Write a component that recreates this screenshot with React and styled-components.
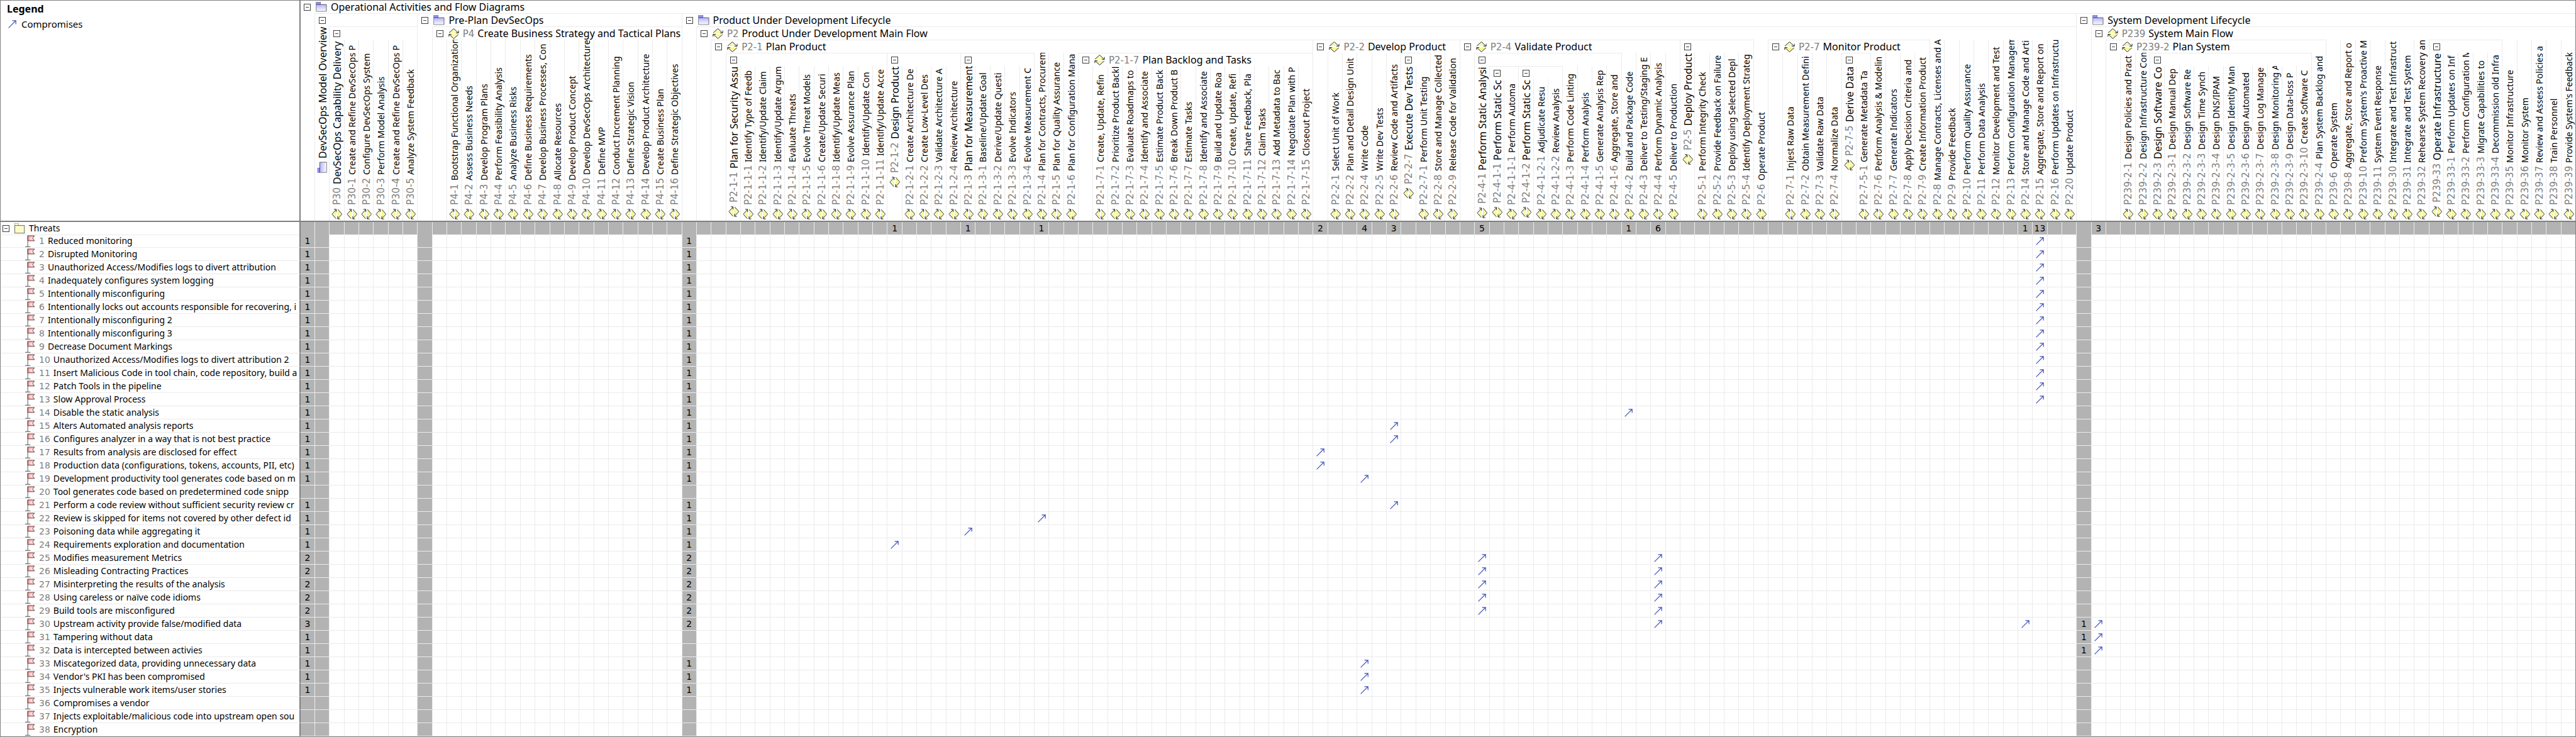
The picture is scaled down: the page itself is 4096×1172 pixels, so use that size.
import React from "react";
import styled, { createGlobalStyle } from "styled-components";

const color = {
  frame: "#808080",
  line: "#ebebeb",
  filled: "#b3b3b3",
  text: "#000",
  id: "#808080",
  box: "#404040",
  link: "#4353b8",
};
const sans = '"Noto Sans", "Open Sans", sans-serif';
const digits = '"DejaVu Sans", "Noto Sans", sans-serif';

/* ---------- data ---------- */

const leaf = (id, name) => ({ id, name });
const group = (id, name, children, opts = {}) => ({ id, name, children, ...opts });
const series = (prefix, entries) => entries.map(([n, name]) => leaf(`${prefix}-${n}`, name));
const numbered = (prefix, names) => names.map((name, i) => leaf(`${prefix}-${i + 1}`, name));
const upright = { upright: true };
const folder = { folder: true };

const activities = [
  group("", "DevSecOps Model Overview", [
    group("P30", "DevSecOps Capability Delivery I", numbered("P30", [
      "Create and Refine DevSecOps P",
      "Configure DevSecOps System",
      "Perform Model Analysis",
      "Create and Refine DevSecOps P",
      "Analyze System Feedback",
    ]), upright),
  ], { ...upright, ...folder }),
  group("", "Pre-Plan DevSecOps", [
    group("P4", "Create Business Strategy and Tactical Plans", numbered("P4", [
      "Bootstrap Functional Organization",
      "Assess Business Needs",
      "Develop Program Plans",
      "Perform Feasibility Analysis",
      "Analyze Business Risks",
      "Define Business Requirements",
      "Develop Business Processes, Con",
      "Allocate Resources",
      "Develop Product Concept",
      "Develop DevSecOps Architecture",
      "Define MVP",
      "Conduct Increment Planning",
      "Define Strategic Vision",
      "Develop Product Architecture",
      "Create Business Plan",
      "Define Strategic Objectives",
    ])),
  ], folder),
  group("", "Product Under Development Lifecycle", [
    group("P2", "Product Under Development Main Flow", [
      group("P2-1", "Plan Product", [
        group("P2-1-1", "Plan for Security Assu", series("P2-1-1", [
          [1, "Identify Type of Feedb"],
          [2, "Identify/Update Claim"],
          [3, "Identify/Update Argum"],
          [4, "Evaluate Threats"],
          [5, "Evolve Threat Models"],
          [6, "Create/Update Securi"],
          [8, "Identify/Update Meas"],
          [9, "Evolve Assurance Plan"],
          [10, "Identify/Update Con"],
          [11, "Identify/Update Acce"],
        ]), upright),
        group("P2-1-2", "Design Product", numbered("P2-1-2", [
          "Create Architecture De",
          "Create Low-Level Des",
          "Validate Architecture A",
          "Review Architecture",
        ]), upright),
        group("P2-1-3", "Plan for Measurement", numbered("P2-1-3", [
          "Baseline/Update Goal",
          "Derive/Update Questi",
          "Evolve Indicators",
          "Evolve Measurement C",
        ]), upright),
        leaf("P2-1-4", "Plan for Contracts, Procurem"),
        leaf("P2-1-5", "Plan for Quality Assurance"),
        leaf("P2-1-6", "Plan for Configuration Mana"),
        group("P2-1-7", "Plan Backlog and Tasks", numbered("P2-1-7", [
          "Create, Update, Refin",
          "Prioritize Product Backl",
          "Evaluate Roadmaps to",
          "Identify and Associate",
          "Estimate Product Back",
          "Break Down Product B",
          "Estimate Tasks",
          "Identify and Associate",
          "Build and Update Roa",
          "Create, Update, Refi",
          "Share Feedback, Pla",
          "Claim Tasks",
          "Add Metadata to Bac",
          "Negotiate Plan with P",
          "Closeout Project",
        ])),
      ]),
      group("P2-2", "Develop Product", [
        leaf("P2-2-1", "Select Unit of Work"),
        leaf("P2-2-2", "Plan and Detail Design Unit"),
        leaf("P2-2-4", "Write Code"),
        leaf("P2-2-5", "Write Dev Tests"),
        leaf("P2-2-6", "Review Code and Artifacts"),
        group("P2-2-7", "Execute Dev Tests", [leaf("P2-2-7-1", "Perform Unit Testing")], upright),
        leaf("P2-2-8", "Store and Manage Collected"),
        leaf("P2-2-9", "Release Code for Validation"),
      ]),
      group("P2-4", "Validate Product", [
        group("P2-4-1", "Perform Static Analysi", [
          group("P2-4-1-1", "Perform Static Sc", [leaf("P2-4-1-1-1", "Perform Automa")], upright),
          group("P2-4-1-2", "Perform Static Sc", [
            leaf("P2-4-1-2-1", "Adjudicate Resu"),
            leaf("P2-4-1-2-2", "Review Analysis"),
          ], upright),
          leaf("P2-4-1-3", "Perform Code Linting"),
          leaf("P2-4-1-4", "Perform Analysis"),
          leaf("P2-4-1-5", "Generate Analysis Rep"),
          leaf("P2-4-1-6", "Aggregate, Store and"),
        ], upright),
        leaf("P2-4-2", "Build and Package Code"),
        leaf("P2-4-3", "Deliver to Testing/Staging E"),
        leaf("P2-4-4", "Perform Dynamic Analysis"),
        leaf("P2-4-5", "Deliver to Production"),
      ]),
      group("P2-5", "Deploy Product", numbered("P2-5", [
        "Perform Integrity Check",
        "Provide Feedback on Failure",
        "Deploy using Selected Depl",
        "Identify Deployment Strateg",
      ]), upright),
      leaf("P2-6", "Operate Product"),
      group("P2-7", "Monitor Product", [
        leaf("P2-7-1", "Injest Raw Data"),
        leaf("P2-7-2", "Obtain Measurement Defini"),
        leaf("P2-7-3", "Validate Raw Data"),
        leaf("P2-7-4", "Normalize Data"),
        group("P2-7-5", "Derive Data", [leaf("P2-7-5-1", "Generate Metadata Ta")], upright),
        leaf("P2-7-6", "Perform Analysis & Modelin"),
        leaf("P2-7-7", "Generate Indicators"),
        leaf("P2-7-8", "Apply Decision Criteria and"),
        leaf("P2-7-9", "Create Information Product"),
      ]),
      ...series("P2", [
        [8, "Manage Contracts, Licenses and A"],
        [9, "Provide Feedback"],
        [10, "Perform Quality Assurance"],
        [11, "Perform Data Analysis"],
        [12, "Monitor Development and Test"],
        [13, "Perform Configuration Managem"],
        [14, "Store and Manage Code and Arti"],
        [15, "Aggregate, Store and Report on"],
        [16, "Perform Updates on Infrastructu"],
        [20, "Update Product"],
      ]),
    ]),
  ], folder),
  group("", "System Development Lifecycle", [
    group("P239", "System Main Flow", [
      group("P239-2", "Plan System", [
        leaf("P239-2-1", "Design Policies and Pract"),
        leaf("P239-2-2", "Design Infrastructure Con"),
        group("P239-2-3", "Design Software Co", numbered("P239-2-3", [
          "Design Manual Dep",
          "Design Software Re",
          "Design Time Synch",
          "Design DNS/IPAM",
          "Design Identity Man",
          "Design Automated",
          "Design Log Manage",
          "Design Monitoring A",
          "Design Data-loss P",
          "Create Software C",
        ]), upright),
        leaf("P239-2-4", "Plan System Backlog and"),
      ]),
      ...series("P239", [
        [6, "Operate System"],
        [8, "Aggregate, Store and Report o"],
        [10, "Preform System's Proactive M"],
        [11, "System Event Response"],
        [30, "Integrate and Test Infrastruct"],
        [31, "Integrate and Test System"],
        [32, "Rehearse System Recovery an"],
      ]),
      group("P239-33", "Operate Infrastructure", numbered("P239-33", [
        "Perform Updates on Inf",
        "Perform Configuration M",
        "Migrate Capabilities to",
        "Decommission old Infra",
      ]), upright),
      ...series("P239", [
        [35, "Monitor Infrastructure"],
        [36, "Monitor System"],
        [37, "Review and Assess Policies a"],
        [38, "Train Personnel"],
        [39, "Provide System's Feedback"],
      ]),
    ]),
  ], folder),
];

/* Each threat lists the ids of the activities it compromises. */
const threats = [
  ["Reduced monitoring", "P2-15"],
  ["Disrupted Monitoring", "P2-15"],
  ["Unauthorized Access/Modifies logs to divert attribution", "P2-15"],
  ["Inadequately configures system logging", "P2-15"],
  ["Intentionally misconfiguring", "P2-15"],
  ["Intentionally locks out accounts responsible for recovering, i", "P2-15"],
  ["Intentionally misconfiguring 2", "P2-15"],
  ["Intentionally misconfiguring 3", "P2-15"],
  ["Decrease Document Markings", "P2-15"],
  ["Unauthorized Access/Modifies logs to divert attribution 2", "P2-15"],
  ["Insert Malicious Code in tool chain, code repository, build a", "P2-15"],
  ["Patch Tools in the pipeline", "P2-15"],
  ["Slow Approval Process", "P2-15"],
  ["Disable the static analysis", "P2-4-2"],
  ["Alters Automated analysis reports", "P2-2-6"],
  ["Configures analyzer in a way that is not best practice", "P2-2-6"],
  ["Results from analysis are disclosed for effect", "P2-2"],
  ["Production data (configurations, tokens, accounts, PII, etc)", "P2-2"],
  ["Development productivity tool generates code based on m", "P2-2-4"],
  ["Tool generates code based on predetermined code snipp"],
  ["Perform a code review without sufficient security review cr", "P2-2-6"],
  ["Review is skipped for items not covered by other defect id", "P2-1-4"],
  ["Poisoning data while aggregating it", "P2-1-3"],
  ["Requirements exploration and documentation", "P2-1-2"],
  ["Modifies measurement Metrics", "P2-4-1", "P2-4-4"],
  ["Misleading Contracting Practices", "P2-4-1", "P2-4-4"],
  ["Misinterpreting the results of the analysis", "P2-4-1", "P2-4-4"],
  ["Using careless or naïve code idioms", "P2-4-1", "P2-4-4"],
  ["Build tools are misconfigured", "P2-4-1", "P2-4-4"],
  ["Upstream activity provide false/modified data", "P2-4-4", "P2-14", "P239"],
  ["Tampering without data", "P239"],
  ["Data is intercepted between activies", "P239"],
  ["Miscategorized data, providing unnecessary data", "P2-2-4"],
  ["Vendor's PKI has been compromised", "P2-2-4"],
  ["Injects vulnerable work items/user stories", "P2-2-4"],
  ["Compromises a vendor"],
  ["Injects exploitable/malicious code into upstream open sou"],
  ["Encryption"],
].map(([name, ...targets], i) => ({ number: i + 1, name, targets }));

const flatten = (nodes) => nodes.flatMap((n) => [n, ...flatten(n.children || [])]);
const columns = flatten(activities).map((node) => ({
  ...node,
  ids: node.folder ? flatten(node.children).map((n) => n.id) : [node.id],
}));
const span = (node) => 1 + flatten(node.children || []).length;
const hits = (threat, column) => threat.targets.filter((t) => column.ids.includes(t)).length;
const columnTotal = (column) =>
  column.folder ? 0 : threats.reduce((sum, threat) => sum + hits(threat, column), 0);

/* ---------- icons ---------- */

const Icon = styled.svg`
  display: block;
  flex: none;
  transform: ${(p) => (p.$turned ? "rotate(90deg)" : "none")};
`;

const FolderIcon = ({ turned }) => (
  <Icon $turned={turned} width="18" height="16" viewBox="0 0 30 27" aria-hidden="true">
    <rect x="1" y="1" width="12" height="6" fill="#9393f8" stroke="#5a5a8c" />
    <rect x="1" y="7" width="27" height="18" fill="url(#folderFill)" />
    <path d="M1 25.5V7M1 25.5H29" stroke="#808088" strokeWidth="1.6" fill="none" />
    <path d="M1 7H28.5V25" stroke="#26262e" strokeWidth="1.2" fill="none" />
  </Icon>
);

const YellowFolderIcon = () => (
  <Icon width="17" height="17" viewBox="0 0 28 28" aria-hidden="true">
    <rect x="1" y="1" width="10" height="6" fill="#fdfde0" stroke="#8c8c70" />
    <rect x="1" y="6" width="25" height="20" fill="#fdfbcb" stroke="#55553c" strokeWidth="1.4" />
  </Icon>
);

const ActivityIcon = ({ turned }) => (
  <Icon $turned={turned} width="17" height="17" viewBox="0 0 30 30" aria-hidden="true">
    <path d="M15 1L28 13H2Z" fill="url(#activityTop)" />
    <path d="M2 12.5L15 1L28 13M28.5 6.5V13H21" fill="none" stroke="#000" strokeWidth="1.5" />
    <path d="M15 29L2 17H28Z" fill="url(#activityBottom)" />
    <path d="M28 17.5L15 29L2 17M1.5 23.5V17H9" fill="none" stroke="#000" strokeWidth="1.5" />
  </Icon>
);

const ThreatIcon = () => (
  <Icon width="16" height="19" viewBox="0 0 27 32" aria-hidden="true">
    <path d="M7 1.500H25L20 8L25 15H7Z" fill="url(#flagFill)" stroke="#3a2222" strokeWidth="1.3" />
    <path d="M7 1V31" stroke="#505050" strokeWidth="1.6" />
    <path d="M0 30.800H14" stroke="#606060" strokeWidth="1.8" />
  </Icon>
);

const LinkIcon = () => (
  <Icon width="13" height="13" viewBox="0 0 13 13" role="img" aria-label="Compromises">
    <path d="M0.600 12.400L12 1M6.500 0.800H12.200V6.500" fill="none" stroke={color.link} strokeWidth="1.200" />
  </Icon>
);

const IconPaints = () => (
  <PaintStore aria-hidden="true">
    <defs>
      <linearGradient id="folderFill" x1="0" y1="0" x2="0" y2="1">
        <stop offset="0" stopColor="#b4b4fa" />
        <stop offset="1" stopColor="#fafaff" />
      </linearGradient>
      <linearGradient id="activityTop" x1="0" y1="0" x2="0" y2="1">
        <stop offset="0" stopColor="#fdfde8" />
        <stop offset="1" stopColor="#f6f68c" />
      </linearGradient>
      <linearGradient id="activityBottom" x1="0" y1="0" x2="0" y2="1">
        <stop offset="0" stopColor="#f4f47a" />
        <stop offset="1" stopColor="#fefef0" />
      </linearGradient>
      <radialGradient id="flagFill" cx="0.6" cy="0.55" r="0.6">
        <stop offset="0" stopColor="#fff2f2" />
        <stop offset="1" stopColor="#f99a9a" />
      </radialGradient>
    </defs>
  </PaintStore>
);

/* ---------- parts ---------- */

const Global = createGlobalStyle`
  *, *::before, *::after { box-sizing: border-box; }
  body { margin: 0; background: #fff; color: ${color.text}; font: 14px/20px ${sans}; }
`;

const PaintStore = styled.svg`
  position: absolute;
  width: 0;
  height: 0;
`;

const Matrix = styled.table`
  display: block;
  width: 100%;
  border: 1px solid ${color.frame};
`;

const Head = styled.thead`
  display: block;
`;

const HeadRow = styled.tr`
  display: grid;
  grid-template-columns: 477px minmax(0, 1fr);
  height: 352px;
  border-bottom: 2px solid ${color.frame};
`;

const Body = styled.tbody`
  display: block;
`;

const Row = styled.tr`
  display: grid;
  grid-template-columns: 477px 22px repeat(${columns.length}, minmax(0, 1fr));
  height: ${(p) => (p.$summary ? "20px" : "21px")};
`;

const LegendCell = styled.td`
  padding: 3px 10px;
  border-right: 2px solid ${color.frame};
`;

const LegendTitle = styled.div`
  font-weight: 700;
  font-size: 16px;
  line-height: 20px;
`;

const LegendItem = styled.div`
  display: flex;
  align-items: center;
  gap: 8px;
  padding: 4px 2px;
  font-size: 15px;
`;

const TreeCell = styled.th`
  display: flex;
  flex-direction: column;
  min-width: 0;
  min-height: 0;
  padding: 0;
  font-weight: 400;
  text-align: left;
`;

const Forest = styled.div`
  display: flex;
  flex: 1;
  min-height: 0;
  padding-left: 22px;
`;

const Branch = styled.div`
  display: flex;
  flex-direction: column;
  flex: ${(p) => p.$span} 1 0;
  min-width: 0;
  min-height: 0;
  border-top: 1px solid ${color.line};
  box-shadow: inset 1px 0 ${color.line};
`;

const Bar = styled.div`
  display: flex;
  align-items: center;
  flex: none;
  height: 20px;
  padding-left: ${(p) => (p.$root ? "5px" : "7px")};
  gap: 6px;
  overflow: hidden;
  white-space: nowrap;
  font-size: 16px;
`;

const Subtree = styled.div`
  display: flex;
  flex: 1;
  min-height: 0;
`;

const Slot = styled.div`
  display: flex;
  flex: 1 1 0;
  min-width: 0;
  min-height: 0;
  overflow: hidden;
  box-shadow: ${(p) => (p.$lined ? `inset 1px 0 ${color.line}` : "none")};
`;

const Offspring = styled.div`
  display: flex;
  flex: ${(p) => p.$span} 1 0;
  min-width: 0;
  min-height: 0;
`;

const Sideways = styled.div`
  display: flex;
  align-items: center;
  flex: 1;
  min-width: 0;
  padding: 2px 2px 1px 0;
  overflow: hidden;
  writing-mode: vertical-rl;
  transform: rotate(180deg);
  white-space: nowrap;
  font-size: ${(p) => (p.$large ? "16px" : "14px")};
`;

const SidewaysText = styled.span`
  display: flex;
  align-items: center;
  gap: 6px;
  margin-top: ${(p) => (p.$large ? "auto" : "0")};
`;

const Title = styled.span`
  display: flex;
  align-items: baseline;
  gap: 5px;
`;

const ElementId = styled.span`
  color: ${color.id};
  font-family: ${digits};
  font-size: ${(p) => (p.$plain ? "14px" : "15px")};
`;

const Toggle = styled.button`
  display: grid;
  place-items: center;
  flex: none;
  width: 11px;
  height: 11px;
  margin-right: 2px;
  padding: 0;
  border: 1px solid ${color.box};
  border-radius: 0;
  background: #fff;

  &::before {
    content: "";
    width: 5px;
    height: 1px;
    background: ${color.box};
  }
`;

const NameCell = styled.th`
  display: flex;
  align-items: center;
  gap: 6px;
  padding: 0 0 0 ${(p) => (p.$top ? "3px" : "39px")};
  overflow: hidden;
  border-right: 2px solid ${color.frame};
  border-bottom: 1px solid ${color.line};
  font-weight: 400;
  white-space: nowrap;
`;

const Cell = styled.td`
  display: flex;
  align-items: center;
  justify-content: center;
  padding: 0;
  border-left: ${(p) => (p.$first ? "none" : `1px solid ${color.line}`)};
  border-bottom: 1px solid ${color.line};
  background: ${(p) => (p.$filled ? color.filled : "#fff")};
  font-family: ${digits};
`;

/* ---------- composition ---------- */

const Label = ({ node }) => (
  <Title>
    {node.id && <ElementId>{node.id}</ElementId>}
    <span>{node.name}</span>
  </Title>
);

const NodeIcon = ({ node, turned }) =>
  node.folder ? <FolderIcon turned={turned} /> : <ActivityIcon turned={turned} />;

const SidewaysLabel = ({ node, large }) => (
  <Sideways $large={large}>
    <SidewaysText $large={large}>
      <NodeIcon node={node} turned />
      <Label node={node} />
    </SidewaysText>
  </Sideways>
);

function TreeNode({ node }) {
  if (!node.children) {
    return (
      <Slot $lined>
        <SidewaysLabel node={node} />
      </Slot>
    );
  }
  return (
    <Branch $span={span(node)}>
      <Bar>
        <Toggle type="button" aria-label={`Collapse ${node.name}`} />
        {!node.upright && (
          <>
            <NodeIcon node={node} />
            <Label node={node} />
          </>
        )}
      </Bar>
      <Subtree>
        <Slot>{node.upright && <SidewaysLabel node={node} large />}</Slot>
        <Offspring $span={span(node) - 1}>
          {node.children.map((child) => (
            <TreeNode key={child.id || child.name} node={child} />
          ))}
        </Offspring>
      </Subtree>
    </Branch>
  );
}

function ThreatRow({ threat }) {
  return (
    <Row>
      <NameCell scope="row">
        <ThreatIcon />
        <Title>
          <ElementId $plain>{threat.number}</ElementId>
          <span>{threat.name}</span>
        </Title>
      </NameCell>
      <Cell $first $filled>{threat.targets.length || null}</Cell>
      {columns.map((column, i) => {
        const count = hits(threat, column);
        return (
          <Cell key={i} $filled={column.folder}>
            {count > 0 && (column.folder ? count : <LinkIcon />)}
          </Cell>
        );
      })}
    </Row>
  );
}

export default function App() {
  return (
    <>
      <Global />
      <IconPaints />
      <Matrix>
        <Head>
          <HeadRow>
            <LegendCell>
              <LegendTitle>Legend</LegendTitle>
              <LegendItem>
                <LinkIcon />
                Compromises
              </LegendItem>
            </LegendCell>
            <TreeCell scope="colgroup">
              <Bar $root>
                <Toggle type="button" aria-label="Collapse Operational Activities and Flow Diagrams" />
                <FolderIcon />
                <Title>Operational Activities and Flow Diagrams</Title>
              </Bar>
              <Forest>
                {activities.map((node) => (
                  <TreeNode key={node.name} node={node} />
                ))}
              </Forest>
            </TreeCell>
          </HeadRow>
        </Head>
        <Body>
          <Row $summary>
            <NameCell scope="row" $top>
              <Toggle type="button" aria-label="Collapse Threats" />
              <YellowFolderIcon />
              Threats
            </NameCell>
            <Cell $first $filled />
            {columns.map((column, i) => (
              <Cell key={i} $filled>{columnTotal(column) || null}</Cell>
            ))}
          </Row>
          {threats.map((threat) => (
            <ThreatRow key={threat.number} threat={threat} />
          ))}
        </Body>
      </Matrix>
    </>
  );
}
